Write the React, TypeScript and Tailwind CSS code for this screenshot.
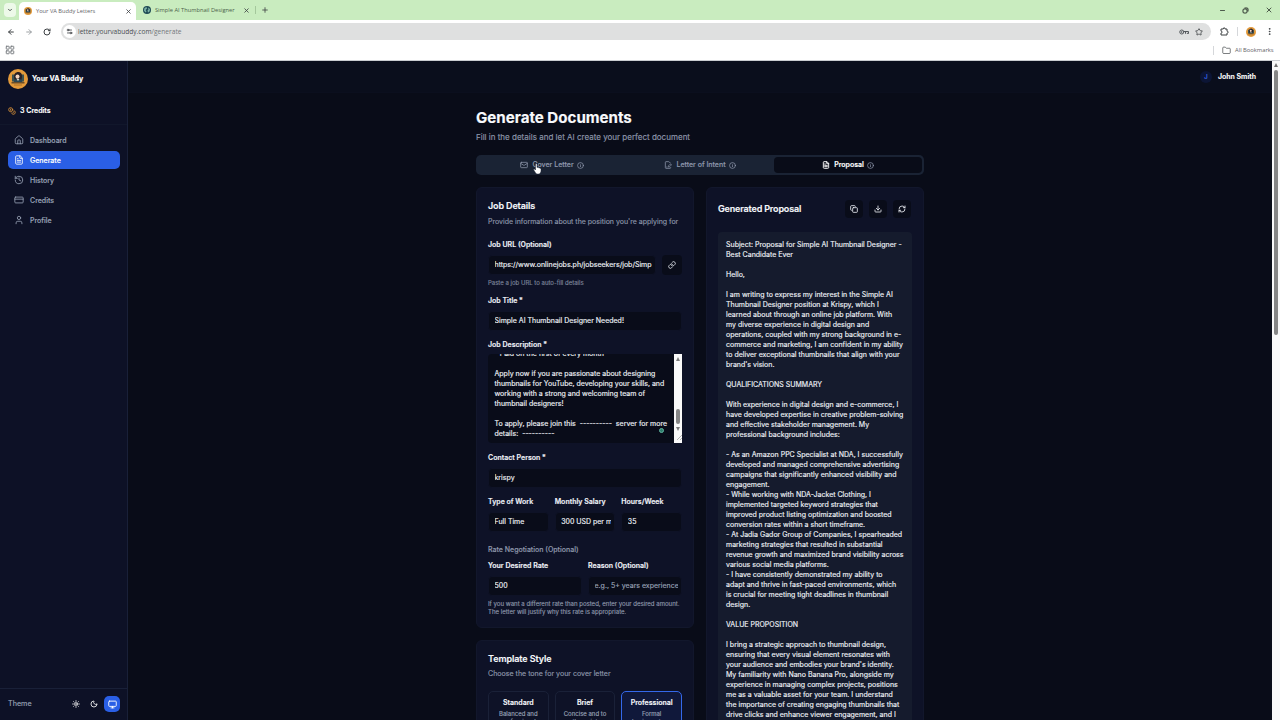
import React from 'react';
import {
  ArrowLeft,
  ArrowRight,
  ChevronDown,
  Coins,
  Copy,
  CreditCard,
  Download,
  FilePenLine,
  FileText,
  Folder,
  History,
  House,
  Info,
  LayoutGrid,
  Link,
  Mail,
  Minus,
  Monitor,
  Moon,
  EllipsisVertical,
  Plus,
  RefreshCw,
  RotateCw,
  Settings2,
  Star,
  Sun,
  User,
  X,
} from 'lucide-react';

const navItems = [
  { label: 'Dashboard', icon: House },
  { label: 'Generate', icon: FileText, active: true },
  { label: 'History', icon: History },
  { label: 'Credits', icon: CreditCard },
  { label: 'Profile', icon: User },
];

const docTabs = [
  { label: 'Cover Letter', icon: Mail },
  { label: 'Letter of Intent', icon: FilePenLine },
  { label: 'Proposal', icon: FileText, active: true },
];

const templates = [
  { name: 'Standard', lines: ['Balanced and', 'professional'] },
  { name: 'Brief', lines: ['Concise and to', 'the point'] },
  { name: 'Professional', lines: ['Formal', 'business tone'], active: true },
];

const description = `- Paid on the first of every month

Apply now if you are passionate about designing
thumbnails for YouTube, developing your skills, and
working with a strong and welcoming team of
thumbnail designers!

To apply, please join this  ----------  server for more
details:  ----------`;

const proposal = `Subject: Proposal for Simple AI Thumbnail Designer -
Best Candidate Ever

Hello,

I am writing to express my interest in the Simple AI
Thumbnail Designer position at Krispy, which I
learned about through an online job platform. With
my diverse experience in digital design and
operations, coupled with my strong background in e-
commerce and marketing, I am confident in my ability
to deliver exceptional thumbnails that align with your
brand's vision.

QUALIFICATIONS SUMMARY

With experience in digital design and e-commerce, I
have developed expertise in creative problem-solving
and effective stakeholder management. My
professional background includes:

- As an Amazon PPC Specialist at NDA, I successfully
developed and managed comprehensive advertising
campaigns that significantly enhanced visibility and
engagement.
- While working with NDA-Jacket Clothing, I
implemented targeted keyword strategies that
improved product listing optimization and boosted
conversion rates within a short timeframe.
- At Jadia Gador Group of Companies, I spearheaded
marketing strategies that resulted in substantial
revenue growth and maximized brand visibility across
various social media platforms.
- I have consistently demonstrated my ability to
adapt and thrive in fast-paced environments, which
is crucial for meeting tight deadlines in thumbnail
design.

VALUE PROPOSITION

I bring a strategic approach to thumbnail design,
ensuring that every visual element resonates with
your audience and embodies your brand's identity.
My familiarity with Nano Banana Pro, alongside my
experience in managing complex projects, positions
me as a valuable asset for your team. I understand
the importance of creating engaging thumbnails that
drive clicks and enhance viewer engagement, and I`;

const BuddyLogo: React.FC<{ size: number }> = ({ size }) => (
  <svg width={size} height={size} viewBox="0 0 20 20" className="shrink-0">
    <circle cx="10" cy="10" r="10" fill="#e39a3b" />
    <path d="M4 5.500h12v7H4z" fill="#3c5250" />
    <path d="M6.200 9c-.6-4 1.400-6 4-6s4.400 2 3.700 6l-.7 2.500H7z" fill="#2a2024" />
    <ellipse cx="9.500" cy="7.600" rx="2" ry="2.200" fill="#f2d3bd" />
    <path d="M5.500 13c.5-2.500 2.500-3 4.500-3s4 .5 4.500 3z" fill="#2b4652" />
    <path d="M8.800 10h2.400L10 12z" fill="#e9e3d8" />
    <path d="M3.500 13.200h13v1.200h-13z" fill="#4b3a26" />
    <path d="M6 16h8" stroke="#a36a25" strokeWidth=".8" />
  </svg>
);

const GlobeIcon = () => (
  <svg width="8" height="8" viewBox="0 0 16 16" className="shrink-0">
    <circle cx="8" cy="8" r="8" fill="#1f4a55" />
    <path d="M3 4l4-2 1 3-3 3 2 3-2 2-3-4zM10 3l4 3-1 5-3 2-1-4 2-2z" fill="#7fb5a8" />
  </svg>
);

const PasswordKeyIcon = () => (
  <svg width="10" height="8" viewBox="0 0 20 16" fill="none" stroke="#55595d" strokeWidth="2">
    <circle cx="5.500" cy="8" r="4" />
    <circle cx="5.500" cy="8" r=".8" />
    <path d="M9.500 7H19v4h-2.500V9.500M13 8v3.500" />
  </svg>
);

const ExtensionIcon = () => (
  <svg width="9" height="9" viewBox="0 0 18 18" fill="none" stroke="currentColor" strokeWidth="2">
    <path d="M2 4h4.500c-.5-3.500 4-3.500 3.500 0H14v4.500c3-.5 3 4 0 3.500V16H2v-4c3 .3 3-4 0-3.700z" strokeLinejoin="round" />
  </svg>
);

const HandCursor = () => (
  <svg width="9" height="12" viewBox="0 0 18 24" className="absolute left-[57px] top-[8px]">
    <path
      d="M5 2.500c0-2 3-2 3 0V9l1-.3c1-.3 2 0 2.300.8 1-.4 2 0 2.400.9 1.300-.3 2.300.3 2.300 1.800V16c0 3-2 6-5 6H9c-2 0-3-1-4-2.500L1.500 14c-.8-1.500.8-2.600 2-1.500L5 14z"
      fill="#fff"
      stroke="#1b2233"
      strokeWidth="1"
    />
  </svg>
);

const BrowserChrome = () => (
  <div className="h-[61px] shrink-0 border-b border-[#c9ccd0] bg-white text-[#3c4043]">
    {/* Tab strip */}
    <div className="flex h-5 items-center bg-[#c9ecbf]">
      <div className="ml-[4px] flex h-[14px] w-[12px] items-center justify-center rounded bg-[#edf9e9]">
        <ChevronDown size={6} strokeWidth={3.500} />
      </div>
      <div className="ml-[3px] mt-[2px] flex h-[18px] w-[117px] items-center rounded-t-[5px] bg-white pl-[5px] pr-[4px] text-[5.700px] text-[#5f6368]">
        <BuddyLogo size={8} />
        <span className="ml-[4px] flex-1 whitespace-nowrap font-[Open_Sans]">Your VA Buddy Letters</span>
        <X size={7} strokeWidth={2.800} className="text-[#3c4043]" />
      </div>
      <div className="flex h-full w-[114px] items-center pl-[7px] text-[5.700px] text-[#4c5f4a]">
        <GlobeIcon />
        <span className="ml-[4px] flex-1 pt-px whitespace-nowrap font-[Open_Sans]">Simple AI Thumbnail Designer</span>
        <X size={7} strokeWidth={2.800} className="text-[#3c4043]" />
      </div>
      <div className="ml-[5px] h-[8px] w-px bg-[#a4c79b]" />
      <Plus size={8} strokeWidth={2.400} className="ml-[5px]" />
      <div className="ml-auto mr-[7px] flex items-center gap-[16px] text-[#1f2421]">
        <Minus size={7} strokeWidth={2.500} />
        <svg width="7" height="7" viewBox="0 0 14 14" fill="none" stroke="currentColor" strokeWidth="1.800">
          <rect x="2" y="4" width="8" height="8" rx="2" />
          <path d="M5 2h5a2 2 0 0 1 2 2v5" />
        </svg>
        <X size={8} strokeWidth={2.200} />
      </div>
    </div>

    {/* Address bar */}
    <div className="flex h-[23px] items-center">
      <ArrowLeft size={8} strokeWidth={3} className="ml-[7px]" />
      <ArrowRight size={8} strokeWidth={2.500} className="ml-[10px] text-[#8b9094]" />
      <RotateCw size={8} strokeWidth={3} className="ml-[10px]" />
      <div className="ml-[10px] flex h-[17px] w-[1150px] shrink-0 items-center rounded-full bg-[#dfe0e0] pl-[2px] pr-[8px]">
        <div className="flex size-[13px] items-center justify-center rounded-full bg-white">
          <Settings2 size={7} strokeWidth={2.800} />
        </div>
        <span className="ml-[2px] flex-1 pt-px font-[Open_Sans] text-[6.600px] text-[#74787c]">
          <span className="text-[#4b4f53]">letter.yourvabuddy.com</span>/generate
        </span>
        <PasswordKeyIcon />
        <Star size={8} strokeWidth={2.400} className="ml-[6px]" />
      </div>
      <div className="ml-[9px]">
        <ExtensionIcon />
      </div>
      <div className="ml-[8px] mr-[8px] h-[9px] w-px bg-[#d5d7da]" />
      <BuddyLogo size={10} />
      <EllipsisVertical size={9} strokeWidth={2.500} className="ml-[9px] shrink-0" />
    </div>

    {/* Bookmarks bar */}
    <div className="flex h-[14px] items-center pl-[5px]">
      <LayoutGrid size={10} strokeWidth={2.400} className="text-[#7b7f83]" />
      <div className="ml-auto mr-[8px] h-[9px] w-px bg-[#d5d7da]" />
      <Folder size={9} strokeWidth={1.800} />
      <span className="ml-[4px] w-[45px] whitespace-nowrap font-[Open_Sans] text-[5.800px] text-[#5f6368]">All Bookmarks</span>
    </div>
  </div>
);

const Sidebar = () => (
  <aside className="flex w-32 shrink-0 flex-col border-r border-[#192038] bg-[#0d1126]">
    <div className="flex h-[36px] shrink-0 items-center gap-1 pl-2">
      <BuddyLogo size={20} />
      <span className="text-[7px] font-bold text-white">Your VA Buddy</span>
    </div>
    <div className="flex h-[28px] shrink-0 items-center gap-1 border-b border-[#11172b] pl-2">
      <Coins size={8} strokeWidth={2.500} className="text-[#d8913a]" />
      <span className="pt-px text-[7px] font-semibold text-white">3 Credits</span>
    </div>
    <nav className="flex flex-1 flex-col gap-[2px] pt-[6px] pr-[7px] pl-2">
      {navItems.map(({ label, icon: Icon, active }) => (
        <div
          key={label}
          className={`flex h-[18px] items-center gap-[6px] rounded-[5px] px-[6px] text-[7px] font-medium ${
            active ? 'bg-[#2a5fe6] text-white' : 'text-[#98a1b5]'
          }`}
        >
          <Icon size={10} />
          <span className="pt-[2px]">{label}</span>
        </div>
      ))}
    </nav>
    <div className="flex h-8 shrink-0 items-center border-t border-[#192038] pr-[7px] pb-px pl-2">
      <span className="flex-1 pt-px text-[7.200px] text-[#98a1b5]">Theme</span>
      <Sun size={8} strokeWidth={2.500} className="mr-[10px] text-white" />
      <Moon size={8} strokeWidth={2.500} className="mr-[6px] text-white" />
      <div className="flex size-4 items-center justify-center rounded-[5px] bg-[#2a5fe6] text-white">
        <Monitor size={9} strokeWidth={2.400} />
      </div>
    </div>
  </aside>
);

const Field: React.FC<{ label: string; value?: string; placeholder?: string; className?: string }> = ({
  label,
  value,
  placeholder,
  className = '',
}) => (
  <div className={`min-w-0 ${className}`}>
    <div className="h-[10px] text-[7px] leading-[10px] font-semibold text-[#eef1f7]">{label}</div>
    <div className="mt-[5px] h-5 overflow-hidden rounded-[4px] border border-[#0e1226] bg-[#090c19] pr-[3.500px] pl-[5.500px]">
      <div className={`overflow-hidden text-[7px] leading-[18px] whitespace-nowrap ${value ? 'text-[#eef1f7]' : 'text-[#98a1b5]'}`}>
        {value || placeholder}
      </div>
    </div>
  </div>
);

const JobDetails = () => (
  <section className="h-[441px] rounded-[6px] border border-[#12172c] bg-[#0e1227] px-[11px] pt-[11px]">
    <h2 className="h-[14px] text-[9px] leading-[14px] font-semibold tracking-[-0.015em] text-[#f5f7fb]">Job Details</h2>
    <p className="mt-[4px] text-[7px] leading-[10px] whitespace-nowrap text-[#8d96aa]">Provide information about the position you're applying for</p>

    <div className="mt-[13px] flex items-end gap-[6px]">
      <Field label="Job URL (Optional)" value="https://www.onlinejobs.ph/jobseekers/job/Simp" className="flex-1" />
      <div className="flex size-5 items-center justify-center rounded-[4px] bg-[#090c19] text-[#eef1f7]">
        <Link size={8} strokeWidth={2.400} />
      </div>
    </div>
    <p className="mt-[4px] text-[6px] leading-[8px] text-[#7b8499]">Paste a job URL to auto-fill details</p>

    <Field label="Job Title *" value="Simple AI Thumbnail Designer Needed!" className="mt-[9px]" />

    <div className="mt-[9px] h-[10px] text-[7px] leading-[10px] font-semibold text-[#eef1f7]">Job Description *</div>
    <div className="relative mt-[4px] flex h-[89px] overflow-hidden rounded-l-[4px] bg-[#090c19]">
      <div className="flex flex-1 flex-col justify-end overflow-hidden pb-[4px] pl-[6.500px]">
        <div className="text-[7px] leading-[10px] whitespace-pre text-[#eef1f7]">{description}</div>
      </div>
      <div className="absolute right-[18px] bottom-[10px] size-[5px] rounded-full border border-[#5fb39f] bg-[#2f7d6c]" />
      <div className="flex w-2 shrink-0 flex-col items-center bg-[#fafafa] py-[3px]">
        <div className="size-0 border-x-[2.500px] border-b-[4px] border-x-transparent border-b-[#7d7d7d]" />
        <div className="mt-[48px] h-[17px] w-1 rounded-full bg-[#868686]" />
        <div className="mt-[3px] size-0 border-x-[2.500px] border-t-[4px] border-x-transparent border-t-[#7d7d7d]" />
        <svg width="5" height="5" viewBox="0 0 5 5" className="mt-[4px] ml-[3px] shrink-0">
          <path d="M0 5L5 0M3 5l2-2" stroke="#9a9a9a" strokeWidth=".7" />
        </svg>
      </div>
    </div>

    <Field label="Contact Person *" value="krispy" className="mt-[9.500px]" />

    <div className="mt-[9.500px] grid grid-cols-3 gap-[6px]">
      <Field label="Type of Work" value="Full Time" />
      <Field label="Monthly Salary" value="300 USD per month" />
      <Field label="Hours/Week" value="35" />
    </div>

    <div className="mt-[13px] text-[7px] leading-[10px] font-medium text-[#8d96aa]">Rate Negotiation (Optional)</div>
    <div className="mt-[6px] grid grid-cols-2 gap-[6px]">
      <Field label="Your Desired Rate" value="500" />
      <Field label="Reason (Optional)" placeholder="e.g., 5+ years experience" />
    </div>
    <p className="mt-[4px] text-[6.060px] leading-[8px] whitespace-nowrap text-[#8d96aa]">
      If you want a different rate than posted, enter your desired amount.
      <br />
      The letter will justify why this rate is appropriate.
    </p>
  </section>
);

const TemplateStyle = () => (
  <section className="mt-3 h-[120px] rounded-[6px] border border-[#12172c] bg-[#0e1227] px-[11px] pt-[11px]">
    <h2 className="h-[14px] text-[9px] leading-[14px] font-semibold tracking-[-0.010em] text-[#f5f7fb]">Template Style</h2>
    <p className="mt-[3px] text-[7.050px] leading-[10px] text-[#8d96aa]">Choose the tone for your cover letter</p>
    <div className="mt-[12px] grid grid-cols-3 gap-[6px]">
      {templates.map((t) => (
        <div
          key={t.name}
          className={`h-[44px] rounded-[5px] border pt-[6px] text-center ${
            t.active ? 'border-[#3468ea] bg-[#10183a]' : 'border-[#1a2138]'
          }`}
        >
          <div className="text-[7px] leading-[10px] font-semibold text-[#f5f7fb]">{t.name}</div>
          <div className="mt-[2px] text-[6px] leading-[8px] text-[#98a1b5]">
            {t.lines.map((l) => (
              <div key={l}>{l}</div>
            ))}
          </div>
        </div>
      ))}
    </div>
  </section>
);

const GeneratedProposal = () => (
  <section className="h-[600px] w-[218px] rounded-[6px] border border-[#12172c] bg-[#0e1227] px-[11px] pt-[12px]">
    <div className="flex h-[18px] items-center gap-[6px] pr-px">
      <h2 className="flex-1 text-[9px] font-semibold tracking-[-0.018em] whitespace-nowrap text-[#f5f7fb]">Generated Proposal</h2>
      {[Copy, Download, RefreshCw].map((Icon, i) => (
        <div key={i} className="flex size-[18px] items-center justify-center rounded-[4px] bg-[#090c19] text-[#eef1f7]">
          <Icon size={8} strokeWidth={2.500} />
        </div>
      ))}
    </div>
    <div className="mt-[14px] h-[520px] rounded-[4px] bg-[#151b2d] px-2 pt-[8px] text-[7px] leading-[10px] whitespace-pre text-[#eef1f7]">
      {proposal}
    </div>
  </section>
);

export default function App() {
  return (
    <div className="flex h-[720px] w-[1280px] flex-col overflow-hidden font-['Inter',sans-serif]">
      <BrowserChrome />
      <div className="flex min-h-0 flex-1 bg-[#090c18] [-webkit-text-stroke:0.150px]">
        <Sidebar />
        <main className="flex flex-1 flex-col overflow-hidden">
          <header className="flex h-8 shrink-0 items-center justify-end gap-[6px] border-b border-[#0b0f1e] bg-[#0a0e1c] pr-4">
            <div className="flex size-3 items-center justify-center rounded-full bg-[#0c1535] text-[6px] text-[#3b6df0]">J</div>
            <span className="pt-px text-[7px] font-semibold text-white">John Smith</span>
          </header>

          <div className="mx-auto w-[448px] pt-[15px]">
            <h1 className="text-[15.100px] leading-[20px] font-bold text-[#f8fafc]">Generate Documents</h1>
            <p className="mt-[3px] text-[8.030px] leading-[12px] text-[#8d96aa]">Fill in the details and let AI create your perfect document</p>

            <div className="relative mt-[12px] grid h-5 grid-cols-3 rounded-[5px] bg-[#1a2334] p-[2px]">
              {docTabs.map(({ label, icon: Icon, active }) => (
                <div
                  key={label}
                  className={`flex items-center justify-center gap-[4px] rounded-[4px] text-[7px] ${
                    active ? 'bg-[#090c18] font-semibold text-white' : 'font-medium text-[#8d96aa]'
                  }`}
                >
                  <Icon size={8} strokeWidth={active ? 2.800 : 2.300} />
                  <span>{label}</span>
                  <Info size={7} strokeWidth={2.300} className="-ml-px text-[#98a1b5]" />
                </div>
              ))}
              <HandCursor />
            </div>

            <div className="mt-3 flex gap-3">
              <div className="w-[218px]">
                <JobDetails />
                <TemplateStyle />
              </div>
              <GeneratedProposal />
            </div>
          </div>
        </main>

        {/* Page scrollbar */}
        <div className="flex w-2 shrink-0 flex-col items-center bg-[#f8f8f8] pt-[2px]">
          <div className="size-0 border-x-[2.500px] border-b-[4px] border-x-transparent border-b-[#6f6f6f]" />
          <div className="mt-[3px] h-[265px] w-1 rounded-full bg-[#858585]" />
        </div>
      </div>
    </div>
  );
}
